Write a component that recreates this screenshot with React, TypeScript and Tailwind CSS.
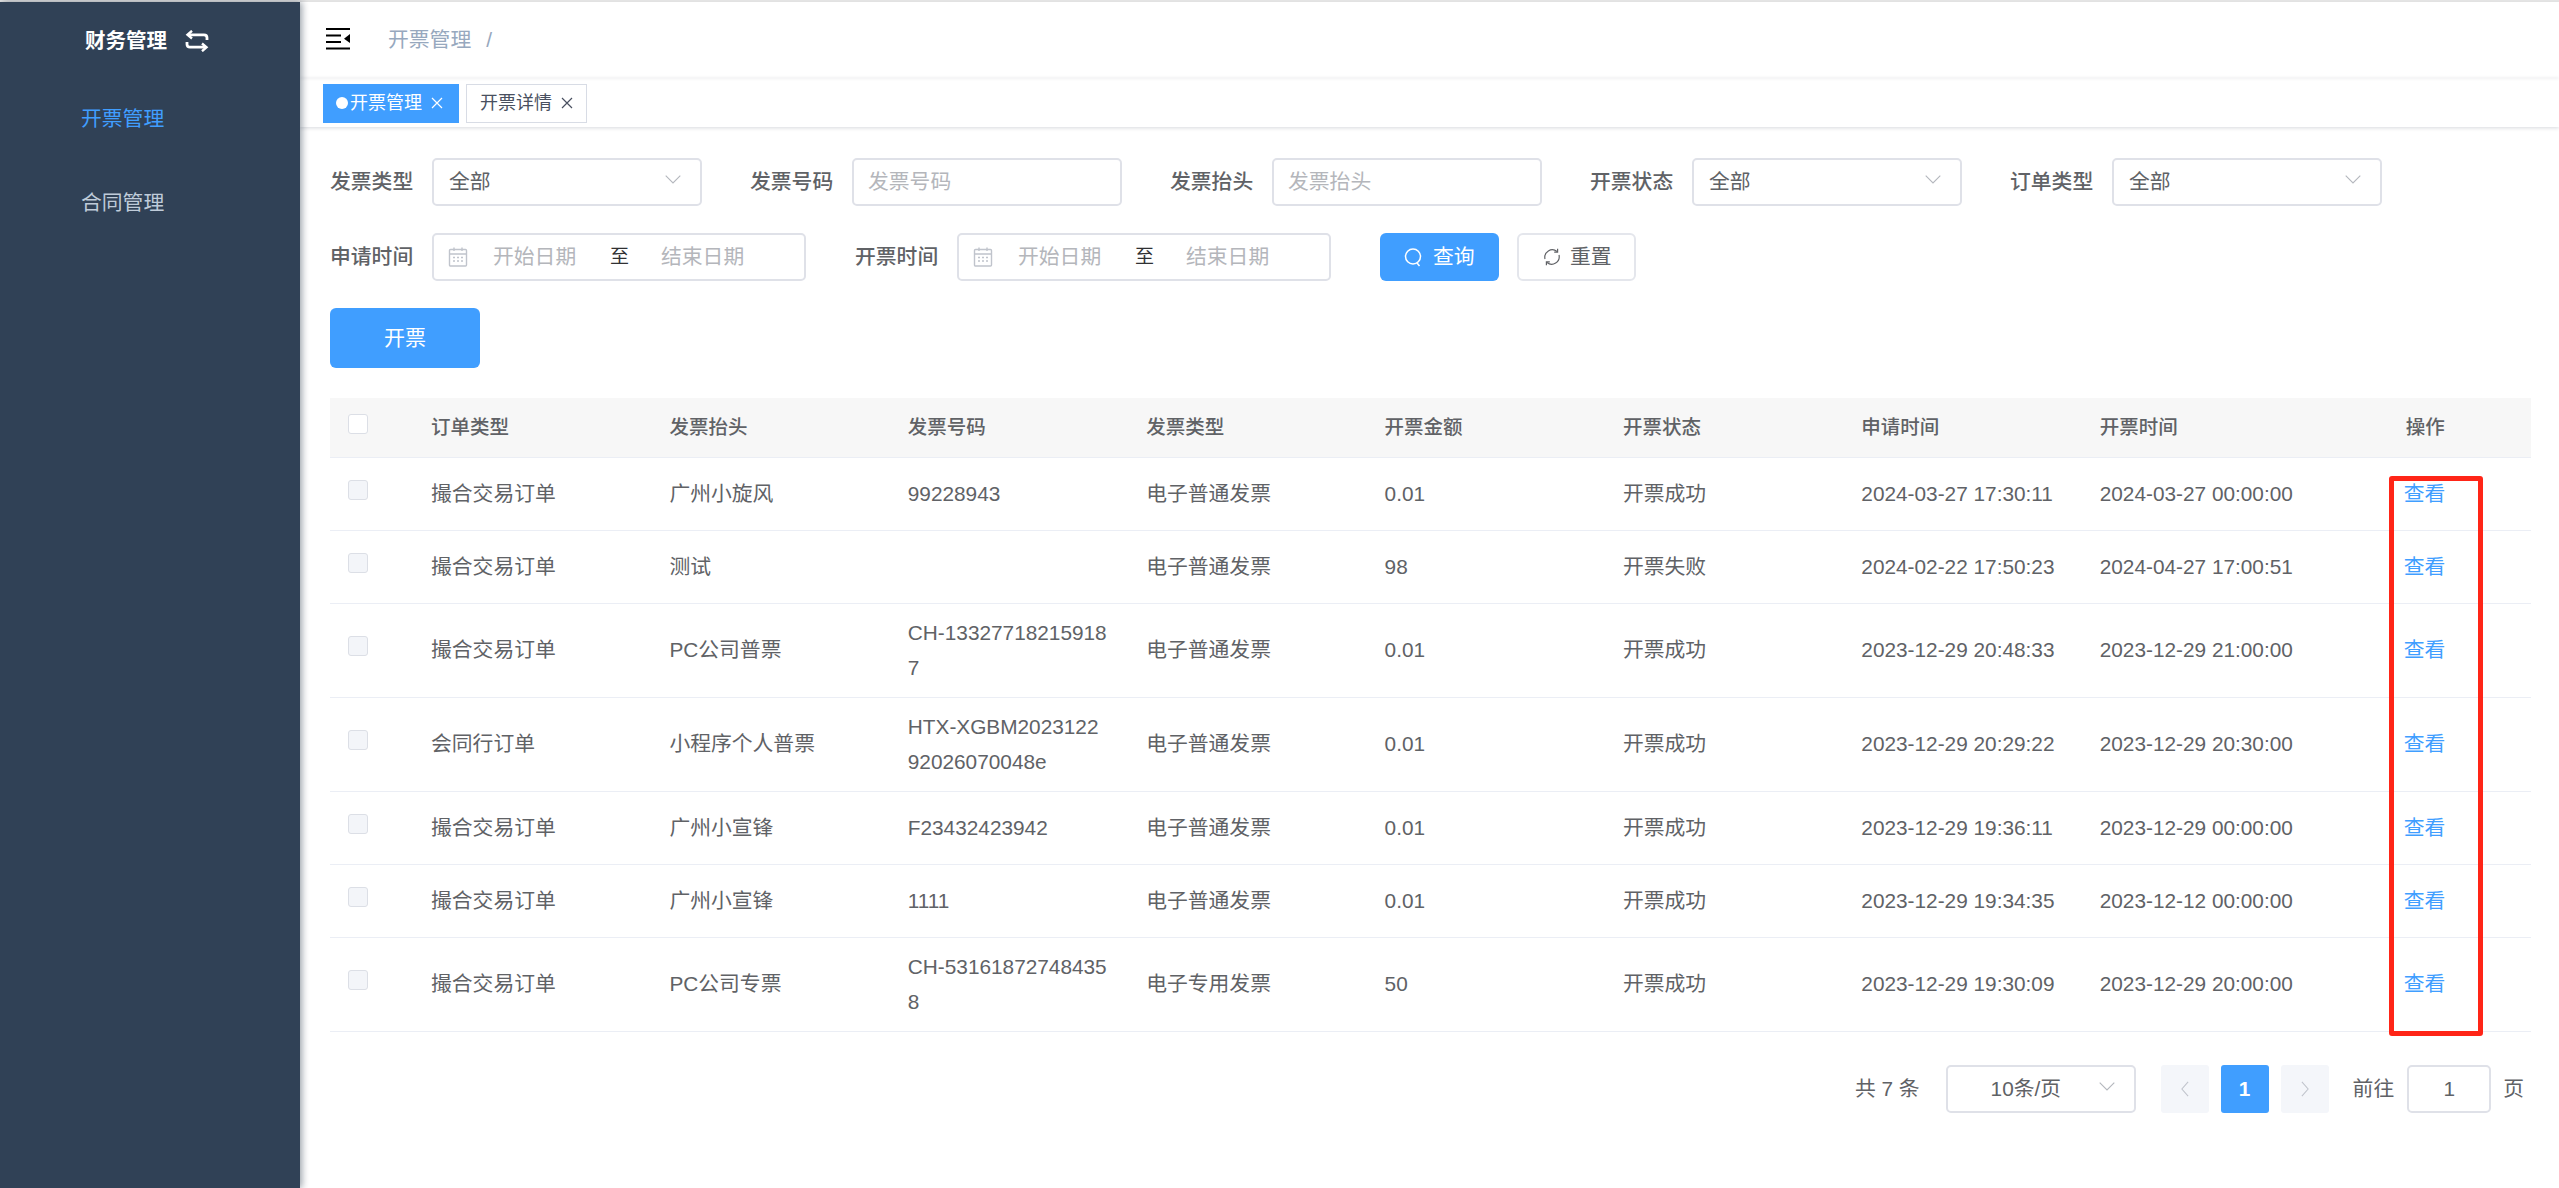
import React from "react";

const rows = [
  { order: "撮合交易订单", title: "广州小旋风", no: ["99228943"], type: "电子普通发票", amount: "0.01", status: "开票成功", apply: "2024-03-27 17:30:11", issue: "2024-03-27 00:00:00", h: "h-[73px]" },
  { order: "撮合交易订单", title: "测试", no: [""], type: "电子普通发票", amount: "98", status: "开票失败", apply: "2024-02-22 17:50:23", issue: "2024-04-27 17:00:51", h: "h-[73px]" },
  { order: "撮合交易订单", title: "PC公司普票", no: ["CH-13327718215918", "7"], type: "电子普通发票", amount: "0.01", status: "开票成功", apply: "2023-12-29 20:48:33", issue: "2023-12-29 21:00:00", h: "h-[94px]" },
  { order: "会同行订单", title: "小程序个人普票", no: ["HTX-XGBM2023122", "92026070048e"], type: "电子普通发票", amount: "0.01", status: "开票成功", apply: "2023-12-29 20:29:22", issue: "2023-12-29 20:30:00", h: "h-[94px]" },
  { order: "撮合交易订单", title: "广州小宣锋", no: ["F23432423942"], type: "电子普通发票", amount: "0.01", status: "开票成功", apply: "2023-12-29 19:36:11", issue: "2023-12-29 00:00:00", h: "h-[73px]" },
  { order: "撮合交易订单", title: "广州小宣锋", no: ["1111"], type: "电子普通发票", amount: "0.01", status: "开票成功", apply: "2023-12-29 19:34:35", issue: "2023-12-12 00:00:00", h: "h-[73px]" },
  { order: "撮合交易订单", title: "PC公司专票", no: ["CH-53161872748435", "8"], type: "电子专用发票", amount: "50", status: "开票成功", apply: "2023-12-29 19:30:09", issue: "2023-12-29 20:00:00", h: "h-[94px]" },
];

const gridCols = "grid grid-cols-[85px_repeat(7,238.4px)_305px_142px] items-center";

function Chevron({ className }: { className: string }) {
  return (
    <svg viewBox="0 0 16 9" className={className} fill="none" stroke="#b4b7bd" strokeWidth="1.1">
      <path d="M0.7 0.7 L8 8 L15.3 0.7" />
    </svg>
  );
}

function Calendar() {
  return (
    <svg viewBox="0 0 20 20" className="w-[20px] h-[20px] shrink-0" fill="none" stroke="#c0c4cc" strokeWidth="1.4">
      <rect x="1.5" y="2.5" width="17" height="16.5" rx="1" />
      <path d="M1.5 7 H18.5 M6 0.5 V4 M14 0.5 V4" />
      <path d="M5 10.5 H7 M9 10.5 H11 M13 10.5 H15 M5 14 H7 M9 14 H11 M13 14 H15" strokeWidth="1.3" />
    </svg>
  );
}

function Label({ children }: { children: React.ReactNode }) {
  return <div className="w-[83px] mr-[19px] shrink-0 text-[20.8px] font-medium text-[#606266] whitespace-nowrap">{children}</div>;
}

function Select({ w = "w-[270px]" }: { w?: string }) {
  return (
    <div className={`${w} h-[48px] shrink-0 rounded-[5px] border-2 border-[#dfe1e8] bg-white flex items-center justify-between pl-[15px] pr-[19px] text-[20.8px] text-[#606266]`}>
      <span>全部</span>
      <Chevron className="w-[16px] h-[9px] -mt-[5px]" />
    </div>
  );
}

function TextInput({ text }: { text: string }) {
  return (
    <div className="w-[270px] h-[48px] shrink-0 rounded-[5px] border-2 border-[#dfe1e8] bg-white flex items-center pl-[14px] text-[20.8px] text-[#b4b6bb]">
      {text}
    </div>
  );
}

function DateRange({ w }: { w: string }) {
  return (
    <div className={`${w} h-[48px] shrink-0 rounded-[5px] border-2 border-[#dfe1e8] bg-white flex items-center pl-[14px] text-[20.8px] text-[#b4b6bb] whitespace-nowrap`}>
      <Calendar />
      <span className="ml-[25px] w-[85px]">开始日期</span>
      <span className="ml-[32px] w-[19px] text-[19px] text-[#303133]">至</span>
      <span className="ml-[32px]">结束日期</span>
    </div>
  );
}

function Checkbox({ header }: { header?: boolean }) {
  return <div className={`w-[20px] h-[20px] ml-[18px] -mt-[7px] rounded-[3px] border border-[#dcdfe6] ${header ? "bg-white" : "bg-[#f3f5f9]"}`} />;
}

function CloseX({ stroke }: { stroke: string }) {
  return (
    <svg viewBox="0 0 12 12" className="w-[12px] h-[12px] shrink-0" fill="none" stroke={stroke} strokeWidth="1.2">
      <path d="M1 1 L11 11 M11 1 L1 11" />
    </svg>
  );
}

export default function App() {
  return (
    <div className="relative w-[2559px] h-[1188px] overflow-hidden bg-white font-['Liberation_Sans','Noto_Sans_CJK_SC',sans-serif]">
      <div className="h-[2px] bg-[#e4e4e4]" />
      <div className="flex h-[1186px]">
        <aside className="relative z-10 w-[300px] shrink-0 bg-[#304156] shadow-[2px_0_7px_rgba(0,21,41,0.4)]">
          <div className="flex items-center h-[78px] pl-[85px] text-[20.5px] font-bold text-white">
            <span>财务管理</span>
            <svg viewBox="0 0 24 22" className="ml-[18px] w-[24px] h-[22px]" fill="none" stroke="#fff" strokeWidth="2.8">
              <path d="M7 0.8 L2.5 4.8 L7 8.5" strokeWidth="2.4" />
              <path d="M3 4.8 H19 Q22 4.8 22 7.8 V10" />
              <path d="M17 21.2 L21.5 17.2 L17 13.5" strokeWidth="2.4" />
              <path d="M21 17.2 H5 Q2 17.2 2 14.2 V12" />
            </svg>
          </div>
          <div className="mt-[11px] h-[56px] flex items-center pl-[81px] text-[20.8px] text-[#409eff]">开票管理</div>
          <div className="mt-[28px] h-[56px] flex items-center pl-[81px] text-[20.8px] text-[#bfcbd9]">合同管理</div>
        </aside>

        <main className="flex-1 min-w-0 flex flex-col">
          <header className="h-[76px] shrink-0 flex items-center pl-[26px] shadow-[0_1px_3px_rgba(0,21,41,0.06)]">
            <svg viewBox="0 0 24 22" className="w-[24px] h-[22px] -mt-[2px] shrink-0" fill="#000">
              <rect x="0" y="0" width="24" height="2" />
              <rect x="0" y="6.5" width="15" height="2" />
              <rect x="0" y="13" width="15" height="2" />
              <rect x="0" y="19.5" width="24" height="2" />
              <path d="M24 6 V15 L18 10.8 Z" />
            </svg>
            <span className="ml-[38px] text-[20.8px] text-[#97a8be]">开票管理</span>
            <span className="ml-[15px] text-[20.8px] text-[#97a8be]">/</span>
          </header>

          <div className="h-[49px] shrink-0 flex items-center pl-[23px] pt-[1px] gap-[7px] shadow-[0_1px_4px_rgba(0,21,41,0.16)]">
            <div className="w-[136px] h-[39px] bg-[#409eff] text-white text-[18px] flex items-center pl-[13px] whitespace-nowrap">
              <span className="w-[12px] h-[12px] rounded-full bg-white mr-[2px]" />
              <span>开票管理</span>
              <span className="ml-[9px]"><CloseX stroke="#ffffff" /></span>
            </div>
            <div className="w-[121px] h-[39px] bg-white border border-[#d8dce5] text-[#495060] text-[18px] flex items-center pl-[13px] whitespace-nowrap">
              <span>开票详情</span>
              <span className="ml-[9px]"><CloseX stroke="#495060" /></span>
            </div>
          </div>

          <div className="pl-[30px] pt-[31px] flex flex-col">
            <div className="flex items-center h-[48px]">
              <Label>发票类型</Label>
              <Select />
              <div className="w-[48px] shrink-0" />
              <Label>发票号码</Label>
              <TextInput text="发票号码" />
              <div className="w-[48px] shrink-0" />
              <Label>发票抬头</Label>
              <TextInput text="发票抬头" />
              <div className="w-[48px] shrink-0" />
              <Label>开票状态</Label>
              <Select />
              <div className="w-[48px] shrink-0" />
              <Label>订单类型</Label>
              <Select />
            </div>

            <div className="flex items-center h-[48px] mt-[27px]">
              <Label>申请时间</Label>
              <DateRange w="w-[374px]" />
              <div className="w-[49px] shrink-0" />
              <Label>开票时间</Label>
              <DateRange w="w-[374px]" />
              <div className="w-[49px] shrink-0" />
              <button className="w-[119px] h-[48px] rounded-[6px] bg-[#409eff] text-white text-[20.8px] flex items-center pl-[24px] gap-[11px]">
                <svg viewBox="0 0 18 20" className="w-[18px] h-[20px]" fill="none" stroke="#fff" strokeWidth="1.5">
                  <circle cx="9" cy="9.5" r="7.5" />
                  <path d="M13 16 L15.5 19" />
                </svg>
                <span>查询</span>
              </button>
              <button className="ml-[18px] w-[119px] h-[48px] rounded-[6px] bg-white border-2 border-[#e4e6ec] text-[#606266] text-[20.8px] flex items-center pl-[24px] gap-[9px]">
                <svg viewBox="0 0 18 18" className="w-[18px] h-[18px]" fill="none" stroke="#606266" strokeWidth="1.2">
                  <path d="M2 11 A7.5 7.5 0 0 1 14 3.5" />
                  <path d="M14.6 0.8 V4.2 H11.2" />
                  <path d="M16 7 A7.5 7.5 0 0 1 4 14.5" />
                  <path d="M3.4 17.2 V13.8 H6.8" />
                </svg>
                <span>重置</span>
              </button>
            </div>

            <button className="mt-[27px] w-[150px] h-[60px] rounded-[6px] bg-[#409eff] text-white text-[21px]">开票</button>

            <div className="mt-[30px] w-[2201px] text-[20.8px] text-[#606266]">
              <div className={`${gridCols} h-[60px] bg-[#f7f7f7] border-b border-[#ebeef5] text-[19.5px] font-medium`}>
                <Checkbox header />
                {["订单类型", "发票抬头", "发票号码", "发票类型", "开票金额", "开票状态", "申请时间", "开票时间"].map((t) => (
                  <div key={t} className="pl-[16px]">{t}</div>
                ))}
                <div className="pl-[17px]">操作</div>
              </div>
              {rows.map((r, i) => (
                <div key={i} className={`${gridCols} ${r.h} pb-[2px] border-b border-[#ebeef5] leading-[35px]`}>
                  <Checkbox />
                  <div className="pl-[16px]">{r.order}</div>
                  <div className="pl-[16px]">{r.title}</div>
                  <div className="pl-[16px] whitespace-nowrap">
                    {r.no.map((line, j) => (
                      <div key={j}>{line}</div>
                    ))}
                  </div>
                  <div className="pl-[16px]">{r.type}</div>
                  <div className="pl-[16px]">{r.amount}</div>
                  <div className="pl-[16px]">{r.status}</div>
                  <div className="pl-[16px] whitespace-nowrap">{r.apply}</div>
                  <div className="pl-[16px] whitespace-nowrap">{r.issue}</div>
                  <div className="pl-[15px] text-[#409eff]">查看</div>
                </div>
              ))}
            </div>

            <div className="mt-[33px] w-[2201px] flex items-center justify-end pr-[7px] h-[48px] text-[20.8px] text-[#606266] whitespace-nowrap">
              <span className="mr-[26px]">共 7 条</span>
              <div className="w-[190px] h-[48px] rounded-[5px] border-2 border-[#dfe1e8] flex items-center pl-[43px] pr-[19px] justify-between">
                <span>10条/页</span>
                <Chevron className="w-[16px] h-[9px] -mt-[5px]" />
              </div>
              <div className="ml-[25px] w-[48px] h-[48px] rounded-[3px] bg-[#f4f6fa] flex items-center justify-center">
                <svg viewBox="0 0 9 18" className="w-[8px] h-[16px]" fill="none" stroke="#c0c4cc" strokeWidth="1.2"><path d="M8 1 L1 9 L8 17" /></svg>
              </div>
              <div className="ml-[12px] w-[48px] h-[48px] rounded-[3px] bg-[#409eff] text-white font-bold flex items-center justify-center">1</div>
              <div className="ml-[12px] w-[48px] h-[48px] rounded-[3px] bg-[#f4f6fa] flex items-center justify-center">
                <svg viewBox="0 0 9 18" className="w-[8px] h-[16px]" fill="none" stroke="#c0c4cc" strokeWidth="1.2"><path d="M1 1 L8 9 L1 17" /></svg>
              </div>
              <span className="ml-[24px]">前往</span>
              <div className="ml-[13px] w-[84px] h-[48px] rounded-[5px] border-2 border-[#dfe1e8] flex items-center justify-center">1</div>
              <span className="ml-[12px]">页</span>
            </div>
          </div>
        </main>
      </div>

      <div className="absolute left-[2389px] top-[476px] w-[94px] h-[560px] rounded-[3px] border-[5px] border-[#ff2517] pointer-events-none" />
    </div>
  );
}
